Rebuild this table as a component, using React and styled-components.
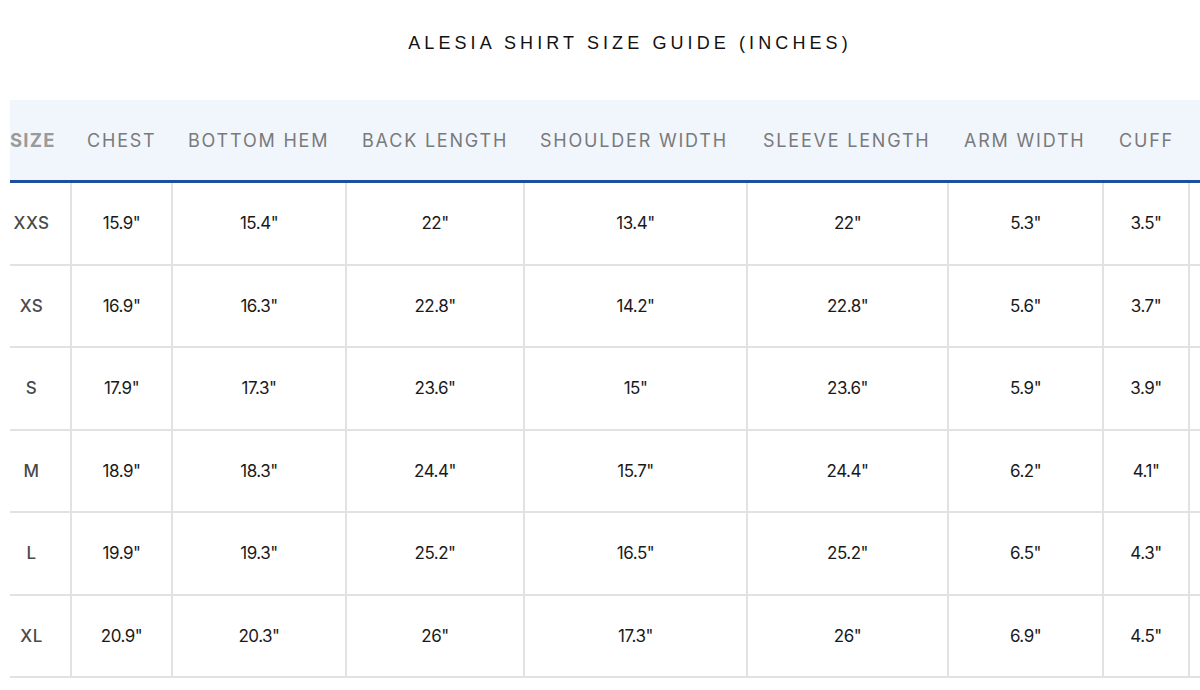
import React from "react";
import styled, { createGlobalStyle } from "styled-components";

const GlobalStyle = createGlobalStyle`
  html, body {
    margin: 0;
    padding: 0;
    background: #ffffff;
  }
  body {
    font-family: Inter, "Noto Sans", sans-serif;
    overflow: hidden;
  }
`;

const COLUMNS = "62px 101px 174px 178px 223px 201px 155px 86px 60px";

const Page = styled.div`
  width: 1200px;
  height: 690px;
  overflow: hidden;
`;

const Sheet = styled.div`
  width: 1240px;
  margin-left: 10px;
`;

const Title = styled.h1`
  margin: 0;
  padding: 32px 0 0;
  height: 100px;
  box-sizing: border-box;
  text-align: center;
  font-family: "Liberation Sans", Arial, sans-serif;
  font-weight: 400;
  font-size: 18px;
  line-height: 22px;
  letter-spacing: 4.1px;
  color: #111111;
`;

const HeadRow = styled.div`
  display: grid;
  grid-template-columns: ${COLUMNS};
  height: 80px;
  background: #f1f6fd;
  border-bottom: 3px solid #1e4f9f;
`;

const HeadCell = styled.div`
  display: flex;
  align-items: center;
  padding-left: ${(p) => (p.$first ? "0" : "15px")};
  font-size: ${(p) => (p.$first ? "18.5px" : "18px")};
  letter-spacing: ${(p) => (p.$first ? "1.2px" : "1.8px")};
  white-space: nowrap;
  font-weight: ${(p) => (p.$first ? 700 : 400)};
  color: ${(p) => (p.$first ? "#9a9a9a" : "#7a7a7a")};
`;

const BodyRow = styled.div`
  display: grid;
  grid-template-columns: ${COLUMNS};
  height: 82.5px;
  box-sizing: border-box;
  border-bottom: 2px solid #e2e2e2;
`;

const Cell = styled.div`
  display: flex;
  align-items: center;
  justify-content: center;
  box-sizing: border-box;
  border-right: ${(p) => (p.$last ? "none" : "2px solid #e2e2e2")};
  padding-right: ${(p) => (p.$size ? "17px" : "0")};
  font-size: 17px;
  font-weight: ${(p) => (p.$size ? 500 : 400)};
  letter-spacing: ${(p) => (p.$size ? "0.4px" : "-0.5px")};
  color: ${(p) => (p.$size ? "#4a4a4a" : "#1a1a1a")};
`;

const headers = [
  "SIZE",
  "CHEST",
  "BOTTOM HEM",
  "BACK LENGTH",
  "SHOULDER WIDTH",
  "SLEEVE LENGTH",
  "ARM WIDTH",
  "CUFF",
];

const rows = [
  ["XXS", "15.9", "15.4", "22", "13.4", "22", "5.3", "3.5"],
  ["XS", "16.9", "16.3", "22.8", "14.2", "22.8", "5.6", "3.7"],
  ["S", "17.9", "17.3", "23.6", "15", "23.6", "5.9", "3.9"],
  ["M", "18.9", "18.3", "24.4", "15.7", "24.4", "6.2", "4.1"],
  ["L", "19.9", "19.3", "25.2", "16.5", "25.2", "6.5", "4.3"],
  ["XL", "20.9", "20.3", "26", "17.3", "26", "6.9", "4.5"],
];

export default function App() {
  return (
    <Page>
      <GlobalStyle />
      <Sheet>
        <Title>ALESIA SHIRT SIZE GUIDE (INCHES)</Title>
        <HeadRow>
          {headers.map((h, i) => (
            <HeadCell key={h} $first={i === 0}>
              {h}
            </HeadCell>
          ))}
          <HeadCell />
        </HeadRow>
        {rows.map((row) => (
          <BodyRow key={row[0]}>
            {row.map((v, i) => (
              <Cell key={i} $size={i === 0}>
                {i === 0 ? v : `${v}"`}
              </Cell>
            ))}
            <Cell $last />
          </BodyRow>
        ))}
      </Sheet>
    </Page>
  );
}
